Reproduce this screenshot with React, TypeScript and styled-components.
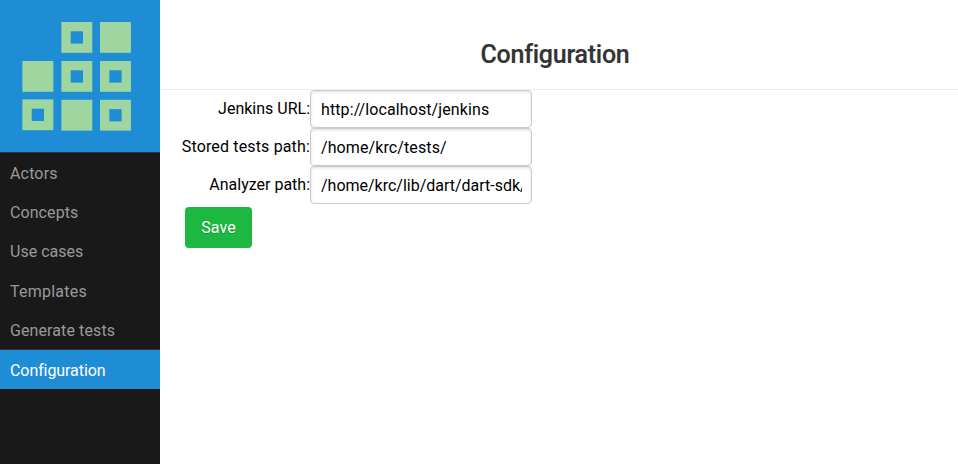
import React, { useState } from 'react';
import styled, { createGlobalStyle } from 'styled-components';

const GlobalStyle = createGlobalStyle`
  * { box-sizing: border-box; }
  body {
    margin: 0;
    background: #fff;
    color: #000;
    font-family: Roboto, "Liberation Sans", sans-serif;
    font-size: 16px;
    overflow: hidden;
  }
`;

const Page = styled.div`
  display: flex;
  height: 100vh;
`;

const Sidebar = styled.nav`
  flex: 0 0 160px;
  background: #191919;
`;

const Brand = styled.div`
  height: 152px;
  background: #1f8dd6;
  svg { display: block; }
`;

const Menu = styled.ul`
  list-style: none;
  margin: 0;
  padding: 0;
  border-top: 1px solid #333;
`;

const MenuItem = styled.li<{ $active: boolean; $tracking: number }>`
  height: ${(p) => (p.$active ? 40 : 39.2)}px;
  padding-left: 10px;
  line-height: ${(p) => (p.$active ? 43 : 41)}px;
  letter-spacing: ${(p) => p.$tracking}px;
  color: ${(p) => (p.$active ? '#fff' : '#999')};
  background: ${(p) => (p.$active ? '#1f8dd6' : 'transparent')};
  box-shadow: ${(p) => (p.$active ? 'inset 0 1px #333' : 'none')};
`;

const Main = styled.main`
  flex: 1;
  min-width: 0;
`;

const Header = styled.header`
  height: 90px;
  padding-top: 39px;
  border-bottom: 1px solid #eee;
  text-align: center;
`;

const Title = styled.h1`
  margin: 0;
  padding-right: 8px;
  color: #333;
  font-size: 25px;
  font-weight: 500;
  letter-spacing: -0.26px;
  line-height: 32px;
  -webkit-text-stroke: 0.2px #333;
`;

const Field = styled.div`
  display: flex;
  height: 38px;
`;

const Label = styled.label<{ $tracking: number }>`
  width: 150px;
  text-align: right;
  line-height: 38px;
  letter-spacing: ${(p) => p.$tracking}px;
  white-space: nowrap;
`;

const Input = styled.input<{ $tracking: number }>`
  width: 222px;
  height: 38px;
  padding: 0 9px 0 10px;
  border: 1px solid #ccc;
  border-radius: 4px;
  box-shadow: inset 0 1px 3px #ddd;
  background: #fff;
  color: #000;
  font: inherit;
  letter-spacing: ${(p) => p.$tracking}px;
  outline: none;
`;

const SaveButton = styled.button`
  display: block;
  width: 67px;
  height: 41px;
  margin: 3px 0 0 25px;
  padding: 0;
  border: 0;
  border-radius: 4px;
  background: #1cb841;
  color: #fff;
  font: inherit;
  letter-spacing: 0.1px;
  text-shadow: 0 1px 1px rgba(0, 0, 0, 0.2);
`;

const tiles = [
  { x: 61.4, y: 22, hole: true },
  { x: 100, y: 22, hole: false },
  { x: 22.4, y: 61, hole: false },
  { x: 61.4, y: 61, hole: true },
  { x: 100, y: 61, hole: true },
  { x: 22.4, y: 99.4, hole: true },
  { x: 61.4, y: 99.8, hole: false },
  { x: 100, y: 99.8, hole: true },
];

const Logo = () => (
  <svg width="160" height="152" viewBox="0 0 160 152" aria-hidden="true">
    {tiles.map(({ x, y, hole }) => (
      <g key={`${x}-${y}`}>
        <rect x={x} y={y} width="30.9" height="30.8" fill="#9fd6a0" />
        {hole && <rect x={x + 9.3} y={y + 9.3} width="12.3" height="12.3" fill="#1f8dd6" />}
      </g>
    ))}
  </svg>
);

const sections = [
  { name: 'Actors', tracking: 0.16 },
  { name: 'Concepts', tracking: 0.08 },
  { name: 'Use cases', tracking: 0.02 },
  { name: 'Templates', tracking: 0.24 },
  { name: 'Generate tests', tracking: 0.1 },
  { name: 'Configuration', tracking: -0.08 },
];

const settings = [
  { id: 'jenkins', label: 'Jenkins URL:', tracking: 0, valueTracking: 0.1, value: 'http://localhost/jenkins' },
  { id: 'tests', label: 'Stored tests path:', tracking: 0.15, valueTracking: 0.1, value: '/home/krc/tests/' },
  { id: 'analyzer', label: 'Analyzer path:', tracking: 0, valueTracking: -0.01, value: '/home/krc/lib/dart/dart-sdk/' },
];

export default function App() {
  const [values, setValues] = useState(settings.map((s) => s.value));
  return (
    <>
      <GlobalStyle />
      <Page>
        <Sidebar>
          <Brand><Logo /></Brand>
          <Menu>
            {sections.map(({ name, tracking }) => (
              <MenuItem key={name} $active={name === 'Configuration'} $tracking={tracking}>
                {name}
              </MenuItem>
            ))}
          </Menu>
        </Sidebar>
        <Main>
          <Header><Title>Configuration</Title></Header>
          {settings.map((s, i) => (
            <Field key={s.id}>
              <Label htmlFor={s.id} $tracking={s.tracking}>{s.label}</Label>
              <Input
                id={s.id}
                $tracking={s.valueTracking}
                value={values[i]}
                onChange={(e) => setValues(values.map((v, j) => (j === i ? e.target.value : v)))}
              />
            </Field>
          ))}
          <SaveButton type="button">Save</SaveButton>
        </Main>
      </Page>
    </>
  );
}
